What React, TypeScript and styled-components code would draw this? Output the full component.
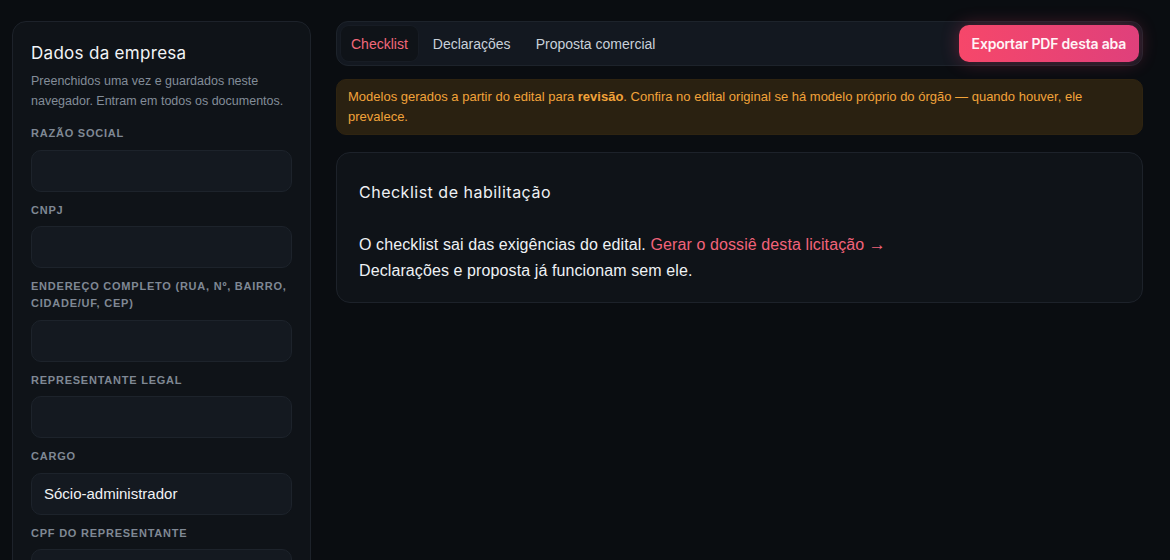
import React from "react";
import styled, { createGlobalStyle } from "styled-components";

const Global = createGlobalStyle`
  html, body { margin: 0; padding: 0; background: #0a0d11; }
  body { font-family: "Liberation Sans", Arial, sans-serif; color: #e6e9ee; }
  * { box-sizing: border-box; }
`;

const Page = styled.div`
  display: grid;
  grid-template-columns: 299px 1fr;
  gap: 25px;
  padding: 21px 27px 0 12px;
  height: 560px;
  overflow: hidden;
`;

const Sidebar = styled.aside`
  background: #0f1318;
  border: 1px solid #1d222a;
  border-radius: 14px;
  padding: 19px 18px 20px 18px;
  height: 600px;
`;

const SideTitle = styled.h2`
  margin: 0;
  font-family: Inter, "Noto Sans", sans-serif;
  font-size: 17px;
  line-height: 24px;
  font-weight: 400;
  color: #f2f4f7;
  letter-spacing: 0.3px;
`;

const SideDesc = styled.p`
  margin: 6px 0 14px;
  font-size: 12.5px;
  line-height: 20px;
  color: #838d99;
`;

const Field = styled.div`
  display: flex;
  flex-direction: column;
  gap: 7.5px;
  margin-bottom: 10px;
`;

const Label = styled.label`
  font-size: 11px;
  line-height: 17px;
  font-weight: 700;
  letter-spacing: 0.07em;
  text-transform: uppercase;
  color: #7f8894;
`;

const Input = styled.input`
  height: 42px;
  width: 100%;
  background: #141920;
  border: 1px solid #1d232b;
  border-radius: 10px;
  padding: 0 12px;
  font-family: "Liberation Sans", Arial, sans-serif;
  font-size: 15px;
  color: #f0f2f5;
  outline: none;
`;

const Main = styled.main`
  display: flex;
  flex-direction: column;
  min-width: 0;
`;

const TabBar = styled.div`
  display: flex;
  align-items: center;
  gap: 5px;
  height: 45px;
  padding: 0 3px 0 4px;
  background: #131820;
  border: 1px solid #1d232b;
  border-radius: 12px;
`;

const Tab = styled.button<{ $active?: boolean }>`
  height: 35px;
  padding: 0 10px;
  border: none;
  border-radius: 8px;
  font-family: "Liberation Sans", Arial, sans-serif;
  font-size: 14px;
  background: ${(p) => (p.$active ? "#0f1318" : "transparent")};
  color: ${(p) => (p.$active ? "#f2687a" : "#c8d0da")};
  box-shadow: ${(p) => (p.$active ? "0 0 0 1px rgba(255,255,255,0.02)" : "none")};
  cursor: pointer;
`;

const Spacer = styled.div`
  flex: 1;
`;

const ExportButton = styled.button`
  height: 37px;
  padding: 0 13px;
  border: none;
  border-radius: 10px;
  background: linear-gradient(90deg, #f6476a 0%, #df407b 100%);
  box-shadow: 0 0 18px rgba(244, 63, 110, 0.3);
  color: #fff4f6;
  font-family: Inter, "Noto Sans", sans-serif;
  font-size: 14px;
  font-weight: 600;
  letter-spacing: -0.2px;
  cursor: pointer;
`;

const Notice = styled.p`
  margin: 13px 0 0;
  background: #2a2111;
  border: 1px solid #2f2411;
  border-radius: 10px;
  padding: 7px 11px;
  font-size: 13px;
  line-height: 20px;
  color: #f2a33a;
`;

const Strong = styled.b`
  font-weight: 700;
`;

const Card = styled.section`
  margin-top: 17px;
  background: #0f1318;
  border: 1px solid #1d222a;
  border-radius: 14px;
  padding: 27px 22px 18px;
`;

const CardTitle = styled.h3`
  margin: 0 0 27px;
  font-family: Inter, "Noto Sans", sans-serif;
  font-size: 16px;
  line-height: 24px;
  font-weight: 400;
  color: #eef1f4;
  letter-spacing: 0.5px;
`;

const CardText = styled.p`
  margin: 0;
  font-size: 16px;
  line-height: 26px;
  color: #eef1f4;
  letter-spacing: 0.1px;
`;

const Link = styled.a`
  color: #f2637a;
  text-decoration: none;
`;

const Arrow = styled.span`
  font-family: "Noto Sans", sans-serif;
  font-size: 17px;
`;

const fields: { label: string; value?: string }[] = [
  { label: "Razão social" },
  { label: "CNPJ" },
  { label: "Endereço completo (rua, nº, bairro, cidade/UF, CEP)" },
  { label: "Representante legal" },
  { label: "Cargo", value: "Sócio-administrador" },
  { label: "CPF do representante" },
];

export default function App() {
  return (
    <>
      <Global />
      <Page>
        <Sidebar>
          <SideTitle>Dados da empresa</SideTitle>
          <SideDesc>
            Preenchidos uma vez e guardados neste navegador. Entram em todos os documentos.
          </SideDesc>
          {fields.map((f) => (
            <Field key={f.label}>
              <Label>{f.label}</Label>
              <Input defaultValue={f.value ?? ""} />
            </Field>
          ))}
        </Sidebar>
        <Main>
          <TabBar>
            <Tab $active>Checklist</Tab>
            <Tab>Declarações</Tab>
            <Tab>Proposta comercial</Tab>
            <Spacer />
            <ExportButton>Exportar PDF desta aba</ExportButton>
          </TabBar>
          <Notice>
            Modelos gerados a partir do edital para <Strong>revisão</Strong>. Confira no edital
            original se há modelo próprio do órgão — quando houver, ele prevalece.
          </Notice>
          <Card>
            <CardTitle>Checklist de habilitação</CardTitle>
            <CardText>
              O checklist sai das exigências do edital.{" "}
              <Link href="#">
                Gerar o dossiê desta licitação <Arrow>→</Arrow>
              </Link>
              <br />
              Declarações e proposta já funcionam sem ele.
            </CardText>
          </Card>
        </Main>
      </Page>
    </>
  );
}
